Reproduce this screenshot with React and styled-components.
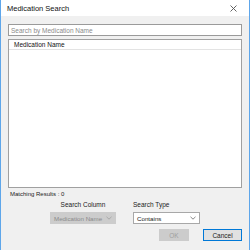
import React from "react";
import styled, { createGlobalStyle } from "styled-components";

const Global = createGlobalStyle`
  html, body { margin: 0; padding: 0; background: #fff; }
  * { box-sizing: border-box; }
`;

const Win = styled.div`
  width: 250px;
  height: 250px;
  display: flex;
  flex-direction: column;
  border-left: 1px solid #5ea6ea;
  border-right: 1px solid #5ea6ea;
  font-family: "Liberation Sans", Arial, sans-serif;
  font-size: 6.5px;
  color: #222;
  overflow: hidden;
`;

const TitleBar = styled.div`
  height: 16px;
  background: #fff;
  display: flex;
  align-items: center;
  justify-content: space-between;
  padding: 0 12px 0 6px;
  font-size: 7.5px;
  color: #111;
`;

const Body = styled.div`
  flex: 1;
  background: #f0f0f0;
  display: flex;
  flex-direction: column;
  padding: 8px 7px 0 7px;
`;

const SearchInput = styled.div`
  height: 12px;
  background: #fff;
  border: 1px solid #9a9a9a;
  display: flex;
  align-items: center;
  padding-left: 2px;
  color: #8a8a8a;
`;

const List = styled.div`
  margin-top: 3px;
  height: 149px;
  background: #fff;
  border: 1px solid #a0a0a0;
  display: flex;
  flex-direction: column;
`;

const ListHeader = styled.div`
  height: 10px;
  border-bottom: 1px solid #e3e3e3;
  display: flex;
  align-items: center;
  padding-left: 5px;
  color: #111;
`;

const Matching = styled.div`
  margin-top: 2px;
  padding-left: 2px;
  height: 8px;
  line-height: 8px;
  font-size: 6px;
  color: #222;
`;

const ControlsRow = styled.div`
  margin-top: 3px;
  display: flex;
  padding-left: 42px;
  gap: 17px;
`;

const Group = styled.div`
  display: flex;
  flex-direction: column;
  align-items: ${(p) => (p.$center ? "center" : "flex-start")};
  width: ${(p) => p.$w}px;
`;

const Label = styled.div`
  height: 8px;
  line-height: 8px;
  margin-bottom: 3px;
`;

const Select = styled.div`
  width: 100%;
  height: 12px;
  display: flex;
  align-items: center;
  justify-content: space-between;
  padding: 0 3px 0 3px;
  font-size: 6.2px;
  white-space: nowrap;
  background: ${(p) => (p.$disabled ? "#cccccc" : "#fff")};
  border: 1px solid ${(p) => (p.$disabled ? "#cccccc" : "#a8a8a8")};
  color: ${(p) => (p.$disabled ? "#8a8a8a" : "#222")};
`;

const Chevron = styled.svg`
  width: 6px;
  height: 4px;
  flex-shrink: 0;
`;

const Buttons = styled.div`
  margin-top: 5px;
  display: flex;
  justify-content: flex-end;
  gap: 14px;
`;

const Button = styled.div`
  width: ${(p) => p.$w}px;
  height: 12px;
  display: flex;
  align-items: center;
  justify-content: center;
  background: ${(p) => (p.$disabled ? "#cccccc" : "#e1e1e1")};
  border: 1px solid ${(p) => (p.$primary ? "#0078d7" : p.$disabled ? "#cccccc" : "#adadad")};
  color: ${(p) => (p.$disabled ? "#a0a0a0" : "#222")};
`;

const Arrow = ({ color }) => (
  <Chevron viewBox="0 0 6 4">
    <path d="M0.5 0.8 L3 3.2 L5.5 0.8" fill="none" stroke={color} strokeWidth="0.7" />
  </Chevron>
);

export default function App() {
  return (
    <>
      <Global />
      <Win>
        <TitleBar>
          <span>Medication Search</span>
          <svg width="7" height="7" viewBox="0 0 7 7">
            <path d="M0.5 0.5 L6.5 6.5 M6.5 0.5 L0.5 6.5" stroke="#555" strokeWidth="0.9" />
          </svg>
        </TitleBar>
        <Body>
          <SearchInput>Search by Medication Name</SearchInput>
          <List>
            <ListHeader>Medication Name</ListHeader>
          </List>
          <Matching>Matching Results : 0</Matching>
          <ControlsRow>
            <Group $w={66} $center>
              <Label>Search Column</Label>
              <Select $disabled>
                <span>Medication Name</span>
                <Arrow color="#9a9a9a" />
              </Select>
            </Group>
            <Group $w={67}>
              <Label>Search Type</Label>
              <Select>
                <span>Contains</span>
                <Arrow color="#555" />
              </Select>
            </Group>
          </ControlsRow>
          <Buttons>
            <Button $w={30} $disabled>OK</Button>
            <Button $w={39} $primary>Cancel</Button>
          </Buttons>
        </Body>
      </Win>
    </>
  );
}
